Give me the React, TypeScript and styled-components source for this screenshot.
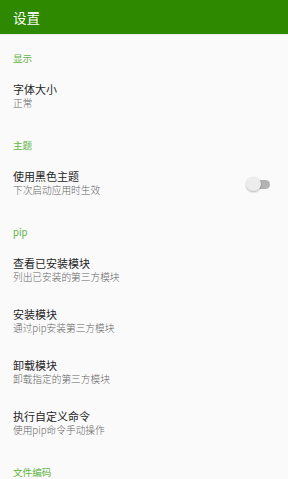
import * as React from "react";
import styled, { createGlobalStyle } from "styled-components";

const GlobalStyle = createGlobalStyle`
  html, body {
    margin: 0;
    padding: 0;
    background: #fafafa;
  }
  body {
    font-family: "Noto Sans CJK SC", "Noto Sans", sans-serif;
  }
`;

const Screen = styled.div`
  width: 288px;
  height: 479px;
  overflow: hidden;
  background: #fafafa;
`;

const AppBar = styled.header`
  height: 34px;
  background: #2e8900;
  display: flex;
  align-items: center;
  padding: 0 13px;
  box-shadow: 0 1px 0 #e4efe0;
`;

const Title = styled.div`
  color: #ffffff;
  font-size: 13.5px;
  line-height: 1;
  margin-top: 1px;
`;

const List = styled.div`
  padding-top: 1px;
`;

const SectionLabel = styled.div<{ $last?: boolean }>`
  padding: ${(p) => (p.$last ? "16px" : "16px")} 13px 6px;
  height: 14px;
  line-height: 14px;
  font-size: 9.6px;
  color: #62b444;
`;

const Item = styled.div`
  height: 27px;
  padding: 12px 18px 12px 13px;
  display: flex;
  align-items: center;
`;

const ItemText = styled.div`
  flex: 1 1 auto;
  display: flex;
  flex-direction: column;
  gap: 1px;
`;

const ItemTitle = styled.div`
  font-size: 11px;
  line-height: 13px;
  color: #262626;
`;

const ItemSummary = styled.div`
  font-size: 9.7px;
  font-weight: 300;
  line-height: 13px;
  color: #666666;
`;

const SwitchTrack = styled.div<{ $on?: boolean }>`
  position: relative;
  width: 23px;
  height: 9px;
  border-radius: 5px;
  background: ${(p) => (p.$on ? "#9fd08a" : "#b3b3b3")};
  margin-top: 1px;
`;

const SwitchThumb = styled.div<{ $on?: boolean }>`
  position: absolute;
  top: -3px;
  left: ${(p) => (p.$on ? "9px" : "-1px")};
  width: 14.5px;
  height: 14.5px;
  border-radius: 50%;
  background: ${(p) => (p.$on ? "#2e8900" : "#ececec")};
  box-shadow: 0 1px 2px rgba(0, 0, 0, 0.28);
`;

interface Pref {
  title: string;
  summary: string;
  toggle?: boolean;
}

interface Section {
  label: string;
  items: Pref[];
}

const sections: Section[] = [
  { label: "显示", items: [{ title: "字体大小", summary: "正常" }] },
  {
    label: "主题",
    items: [{ title: "使用黑色主题", summary: "下次启动应用时生效", toggle: true }],
  },
  {
    label: "pip",
    items: [
      { title: "查看已安装模块", summary: "列出已安装的第三方模块" },
      { title: "安装模块", summary: "通过pip安装第三方模块" },
      { title: "卸载模块", summary: "卸载指定的第三方模块" },
      { title: "执行自定义命令", summary: "使用pip命令手动操作" },
    ],
  },
  { label: "文件编码", items: [] },
];

export default function App() {
  return (
    <Screen>
      <GlobalStyle />
      <AppBar>
        <Title>设置</Title>
      </AppBar>
      <List>
        {sections.map((section, i) => (
          <React.Fragment key={section.label}>
            <SectionLabel $last={i === sections.length - 1}>{section.label}</SectionLabel>
            {section.items.map((item) => (
              <Item key={item.title}>
                <ItemText>
                  <ItemTitle>{item.title}</ItemTitle>
                  <ItemSummary>{item.summary}</ItemSummary>
                </ItemText>
                {item.toggle && (
                  <SwitchTrack>
                    <SwitchThumb />
                  </SwitchTrack>
                )}
              </Item>
            ))}
          </React.Fragment>
        ))}
      </List>
    </Screen>
  );
}
